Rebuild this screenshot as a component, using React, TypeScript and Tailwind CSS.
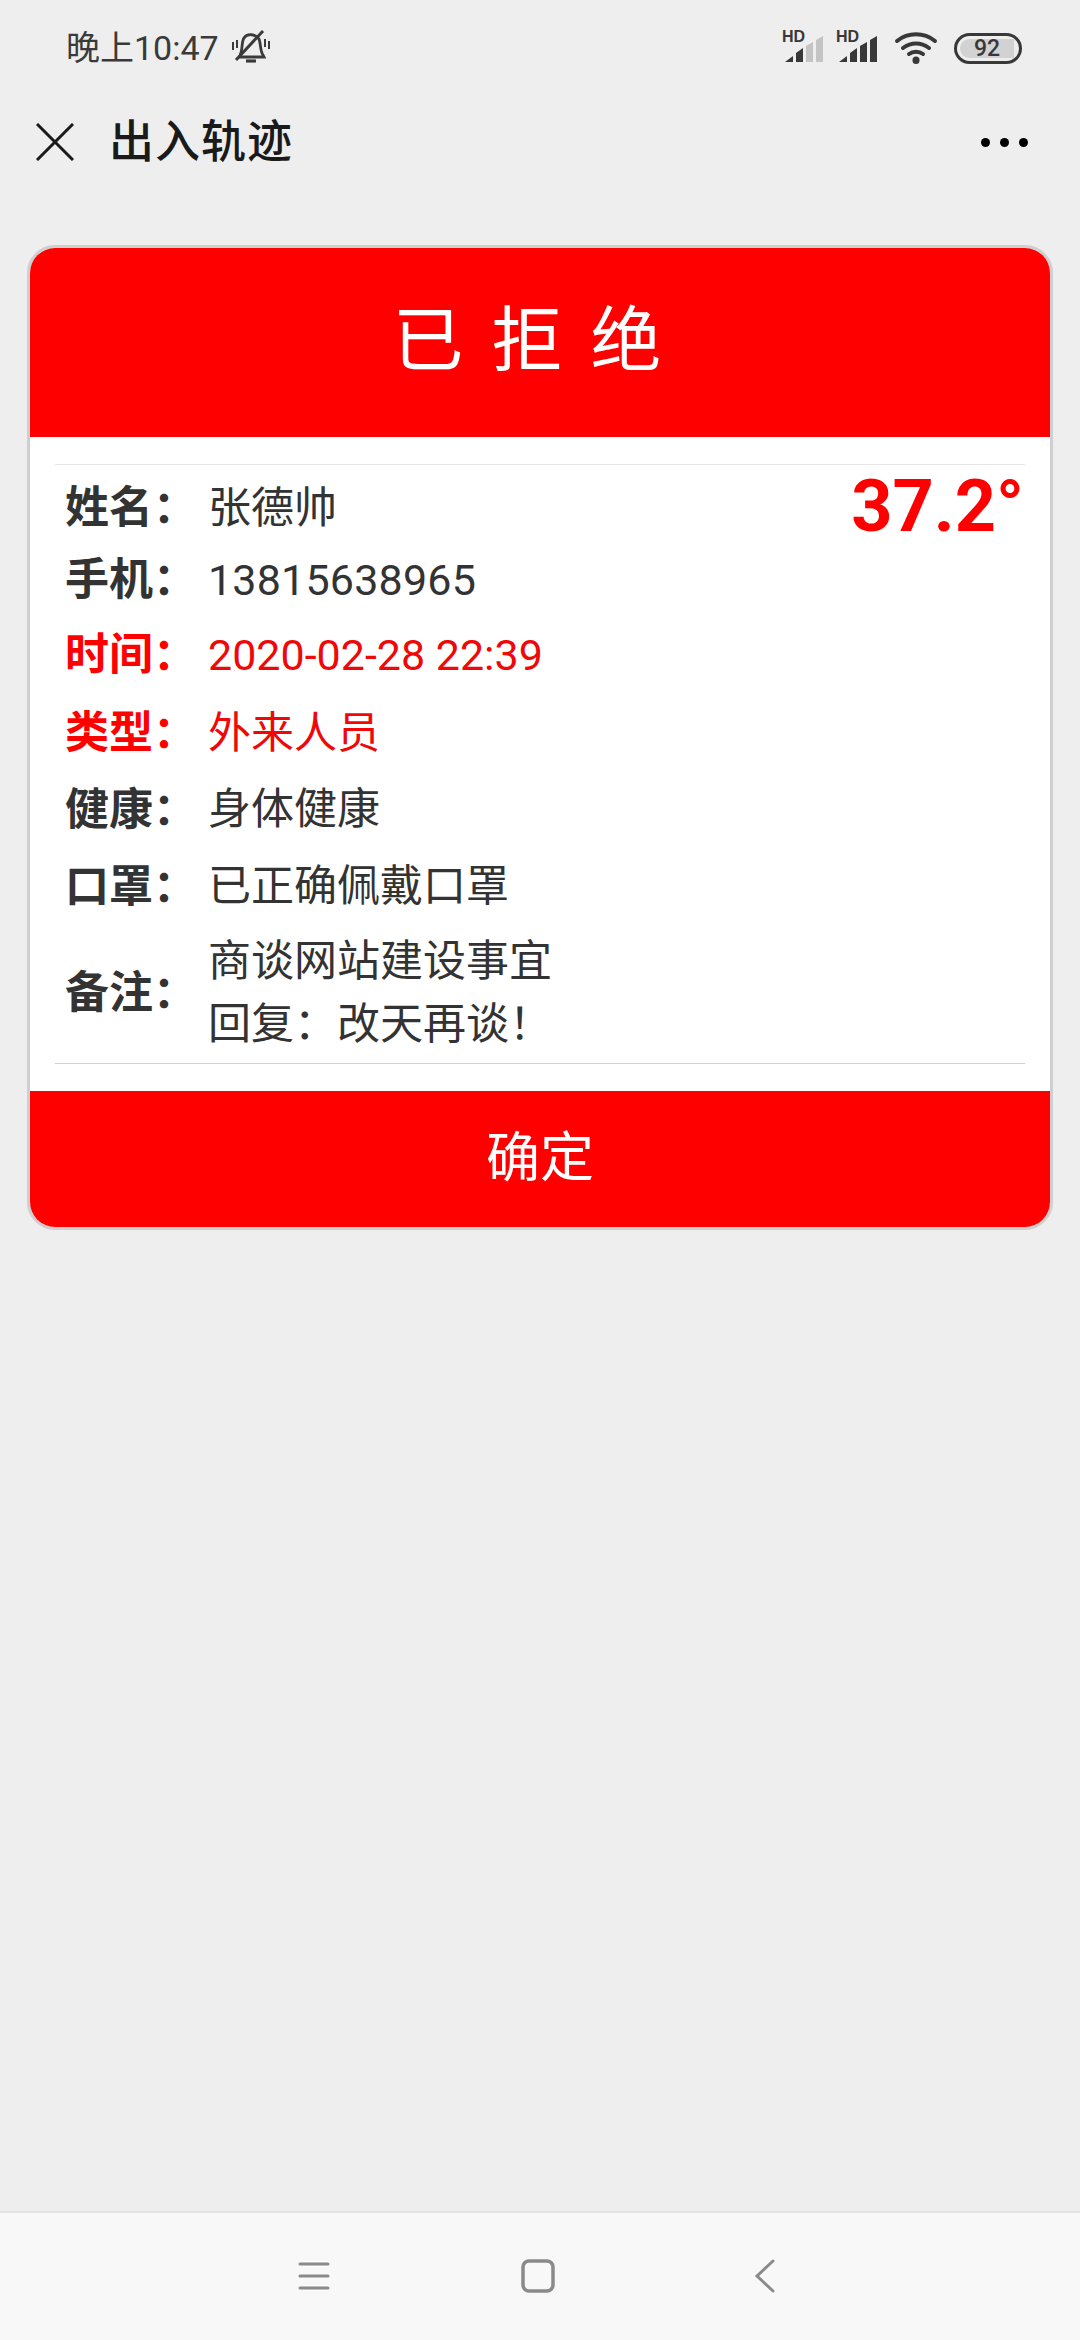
import React from "react";

const cjk = "font-['Roboto','Noto_Sans_CJK_SC',sans-serif]";

function Signal({ level }: { level: number }) {
  const bars = [
    "M0 28 L8 22 V28 Z",
    "M11 28 V19 L18 14 V28 Z",
    "M21 28 V12 L28 8 V28 Z",
    "M31 28 V6 L38 2 V28 Z",
  ];
  return (
    <div className="relative w-[42px] h-[32px]">
      <span className="absolute left-[-2px] top-[-4px] text-[16px] leading-[18px] font-bold text-[#383838] font-['Liberation_Sans',sans-serif]">
        HD
      </span>
      <svg width="42" height="32" viewBox="0 0 42 32" className="absolute left-[1px] top-0">
        {bars.map((d, i) => (
          <path key={i} d={d} fill={i < level ? "#383838" : "#c4c4c4"} transform="translate(0 2)" />
        ))}
      </svg>
    </div>
  );
}

function Row({
  label,
  red,
  className,
  children,
}: {
  label: string;
  red?: boolean;
  className?: string;
  children: React.ReactNode;
}) {
  return (
    <div className={`flex items-center ${className ?? ""}`}>
      <div className={`w-[143px] shrink-0 text-[44px] leading-none font-bold ${red ? "text-[#ff0000]" : "text-[#333333]"}`}>
        {label}
      </div>
      <div className={`text-[43px] ${red ? "text-[#f00808]" : "text-[#333333]"}`}>{children}</div>
    </div>
  );
}

export default function App() {
  return (
    <div className={`w-[1080px] h-[2340px] bg-[#eeeeee] flex flex-col ${cjk}`}>
      <div className="h-[94px] shrink-0 flex items-center justify-between pl-[66px] pr-[58px] pt-[2px]">
        <div className="flex items-center">
          <span className="text-[34px] leading-none text-[#3a3a3a]">晚上10:47</span>
          <svg width="38" height="38" viewBox="0 0 38 38" fill="none" stroke="#3a3a3a" className="ml-[13px]">
            <path d="M8 26 C11 21 9 14 12 9 C15 4 24 5 27 10 C29 15 28 22 31 26 L32 28 H6" strokeWidth="2.8" />
            <path d="M14 32 H24" strokeWidth="3.2" />
            <path d="M4 31 L31 2" strokeWidth="3" />
            <path d="M1 13 V21 M5 11 V19 M33 10 V18 M37 12 V20" strokeWidth="2" />
          </svg>
        </div>
        <div className="flex items-center">
          <Signal level={2} />
          <div className="w-[12px]" />
          <Signal level={4} />
          <svg width="44" height="32" viewBox="0 0 44 32" fill="none" stroke="#383838" strokeWidth="4" strokeLinecap="round" className="ml-[14px]">
            <path d="M3 9 C14 0 30 0 41 9" />
            <path d="M9 16 C17 10 27 10 35 16" />
            <path d="M15 22 C19 19 25 19 29 22" />
            <path d="M22 28 L22 28.5" strokeWidth="7" />
          </svg>
          <div className="ml-[16px] w-[68px] h-[31px] rounded-full border-[3px] border-[#383838] p-[3px]">
            <div className="h-full w-[54px] rounded-l-full rounded-r-[10px] bg-[#d2d2d2] flex items-center justify-center text-[23px] leading-none font-medium text-[#383838]">
              92
            </div>
          </div>
        </div>
      </div>

      <div className="h-[96px] shrink-0 flex items-center justify-between pl-[36px] pr-[52px]">
        <div className="flex items-center">
          <svg width="38" height="38" viewBox="0 0 38 38" stroke="#1a1a1a" strokeWidth="3" fill="none">
            <path d="M1 1 L37 37 M37 1 L1 37" />
          </svg>
          <span className="ml-[35px] text-[45px] leading-none font-medium tracking-[1px] text-[#1a1a1a]">出入轨迹</span>
        </div>
        <div className="flex gap-[10px]">
          <div className="w-[9px] h-[9px] rounded-full bg-black" />
          <div className="w-[9px] h-[9px] rounded-full bg-black" />
          <div className="w-[9px] h-[9px] rounded-full bg-black" />
        </div>
      </div>

      <div className="mx-[27px] mt-[55px] h-[985px] shrink-0 rounded-[28px] border-[3px] border-[#cfcfcf] bg-white overflow-hidden flex flex-col">
        <div className="h-[189px] shrink-0 bg-[#ff0000] flex items-center justify-center text-white text-[71px] leading-none tracking-[28px] pl-[2px] pb-[4px]">
          已拒绝
        </div>
        <div className="relative mx-[25px] mt-[27px] h-[600px] border-y border-t-[#e6e6e6] border-b-[#d2d2d2] pl-[10px]">
          <div className="absolute right-[1px] top-[0px] text-[72px] leading-[84px] font-bold text-[#ff0000]">37.2°</div>
          <Row label="姓名：" className="h-[76px] mt-[5px]">张德帅</Row>
          <Row label="手机：" className="h-[68px]"><span className="tracking-[0.2px]">13815638965</span></Row>
          <Row label="时间：" red className="h-[76px] mt-[3px]">2020-02-28 22:39</Row>
          <Row label="类型：" red className="h-[76px] mt-[2px]">外来人员</Row>
          <Row label="健康：" className="h-[77px]">身体健康</Row>
          <Row label="口罩：" className="h-[77px]">已正确佩戴口罩</Row>
          <Row label="备注：" className="h-[135px]">
            <div className="leading-[63px]">
              商谈网站建设事宜
              <br />
              回复：改天再谈！
            </div>
          </Row>
        </div>
        <div className="mt-auto h-[136px] shrink-0 bg-[#ff0000] flex items-center justify-center text-white text-[54px] leading-none">
          确定
        </div>
      </div>

      <div className="mt-auto h-[129px] shrink-0 bg-[#f8f8f8] border-t-2 border-t-[#e4e4e4] flex items-center justify-center pb-[2px] pr-[6px]">
        <svg width="32" height="32" viewBox="0 0 32 32" stroke="#8a8a8a" strokeWidth="3" strokeLinecap="round" fill="none">
          <path d="M2 4 H30 M2 16 H30 M2 28 H30" />
        </svg>
        <svg width="34" height="34" viewBox="0 0 34 34" stroke="#8a8a8a" strokeWidth="3.5" fill="none" className="ml-[191px]">
          <rect x="2" y="2" width="30" height="30" rx="6" />
        </svg>
        <svg width="22" height="34" viewBox="0 0 22 34" stroke="#8a8a8a" strokeWidth="3" strokeLinecap="round" fill="none" className="ml-[199px]">
          <path d="M19 2 L3 17 L19 32" />
        </svg>
      </div>
    </div>
  );
}
